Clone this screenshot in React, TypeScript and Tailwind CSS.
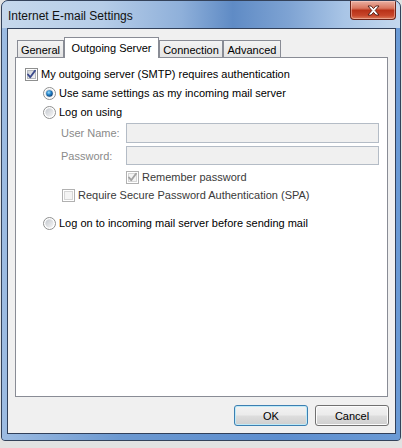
import React from "react";

const font = { fontFamily: '"Liberation Sans", Arial, sans-serif' };

function CheckBox({ checked, disabled }: { checked?: boolean; disabled?: boolean }) {
  const border = disabled ? "#b1b1b1" : "#8e8f8f";
  const mark = disabled ? "#a3a3a3" : "#3b4a8c";
  return (
    <svg width="13" height="13" viewBox="0 0 13 13" className="shrink-0">
      <defs>
        <linearGradient id="cbin" x1="0" y1="0" x2="1" y2="1">
          <stop offset="0" stopColor="#cbcfd5" />
          <stop offset="1" stopColor="#f6f6f6" />
        </linearGradient>
      </defs>
      <rect x="0.5" y="0.5" width="12" height="12" fill="#fff" stroke={border} />
      <rect x="2.5" y="2.5" width="8" height="8" fill={disabled ? "#f4f4f4" : "url(#cbin)"} stroke={disabled ? "#d6d6d6" : "#b4b8be"} />
      {checked && (
        <path d="M3 6.5 L5.2 9.2 L10 2.8" fill="none" stroke={mark} strokeWidth="1.9" strokeLinecap="round" strokeLinejoin="round" />
      )}
    </svg>
  );
}

function Radio({ checked }: { checked?: boolean }) {
  return (
    <svg width="13" height="13" viewBox="0 0 13 13" className="shrink-0">
      <defs>
        <linearGradient id="rdin" x1="0" y1="0" x2="1" y2="1">
          <stop offset="0" stopColor="#c4c8ce" />
          <stop offset="1" stopColor="#f7f7f7" />
        </linearGradient>
        <radialGradient id="rddot" cx="0.4" cy="0.35" r="0.7">
          <stop offset="0" stopColor="#9ee0ff" />
          <stop offset="0.5" stopColor="#1f7fc6" />
          <stop offset="1" stopColor="#0d3a6e" />
        </radialGradient>
      </defs>
      <circle cx="6.5" cy="6.5" r="6" fill="#fff" stroke="#8e8f8f" />
      <circle cx="6.5" cy="6.5" r="4.2" fill="url(#rdin)" />
      {checked && <circle cx="6.5" cy="6.5" r="3.3" fill="url(#rddot)" />}
    </svg>
  );
}

export default function App() {
  return (
    <div className="w-[402px] h-[448px] overflow-hidden bg-[#e2e2e2] text-[11px] leading-[16px] text-black" style={font}>
      <div className="ml-[1px] w-[400px] h-[441px] flex flex-col border border-[#34425a] rounded-t-[7px] rounded-b-[4px] overflow-hidden bg-[#6493cf]">
        {/* title bar */}
        <div className="h-[27px] shrink-0 flex items-start pl-[6px] pr-[4px] bg-[linear-gradient(90deg,#c6d8ec_0%,#b6cde8_25%,#8fb0da_45%,#5f8bc5_58%,#7ea3d3_72%,#a9c5e6_86%,#c4d8ee_100%)]">
          <span className="mt-[7px] text-[12px] text-[#111]">Internet E-mail Settings</span>
          <div className="ml-auto w-[46px] h-[19px] flex items-center justify-center rounded-b-[4px] border border-t-0 border-[#6b2318] bg-[linear-gradient(180deg,#eab0a2_0%,#d9765f_40%,#b93218_52%,#c7452a_80%,#dc7a58_100%)] shadow-[inset_0_0_0_1px_rgba(255,220,210,0.45)]">
            <svg width="13" height="11" viewBox="0 0 13 11">
              <path
                d="M1 1 H4.2 L6.5 3.6 L8.8 1 H12 L8.2 5.5 L12 10 H8.8 L6.5 7.4 L4.2 10 H1 L4.8 5.5 Z"
                fill="#fff"
                stroke="#4d1a12"
                strokeWidth="0.9"
                strokeLinejoin="round"
              />
            </svg>
          </div>
        </div>

        {/* frame + client */}
        <div className="flex-1 flex flex-col pl-[5px] pr-[4px] pb-[6px] bg-[linear-gradient(90deg,#9dbce2,#6b98d0_30%,#5d8ecf_70%,#6a9ad5)]">
          <div className="flex-1 flex flex-col border border-[#31405a] bg-[#f0f0f0] pt-[8px] px-[7px] pb-[7px]">
            {/* tabs */}
            <div className="h-[20px] flex items-end pl-[2px] text-[12px]">
              <div className="w-[47px] h-[17px] flex items-center justify-center pt-[1px] border border-b-0 border-[#898c95] bg-[linear-gradient(180deg,#f3f3f3,#e4e4e4)] text-[11px]">
                General
              </div>
              <div className="w-[95px] h-[21px] -mb-px relative z-10 flex items-center justify-center pb-[1px] border border-b-0 border-[#898c95] bg-white text-[11px]">
                Outgoing Server
              </div>
              <div className="w-[64px] h-[17px] flex items-center justify-center pt-[1px] border border-b-0 border-[#898c95] bg-[linear-gradient(180deg,#f3f3f3,#e4e4e4)] text-[11px]">
                Connection
              </div>
              <div className="w-[58px] h-[17px] flex items-center justify-center pt-[1px] border border-b-0 border-[#898c95] bg-[linear-gradient(180deg,#f3f3f3,#e4e4e4)] text-[11px]">
                Advanced
              </div>
            </div>

            {/* panel */}
            <div className="h-[340px] border border-[#898c95] bg-white flex flex-col pt-[8px]">
              <div className="h-[16px] flex items-center gap-[3px] pl-[9px]">
                <CheckBox checked />
                <span>My outgoing server (SMTP) requires authentication</span>
              </div>
              <div className="h-[16px] mt-[3px] flex items-center gap-[3px] pl-[27px]">
                <Radio checked />
                <span>Use same settings as my incoming mail server</span>
              </div>
              <div className="h-[16px] mt-[3px] flex items-center gap-[3px] pl-[27px]">
                <Radio />
                <span>Log on using</span>
              </div>
              <div className="h-[20px] mt-[3px] flex items-center pl-[45px]">
                <span className="w-[65px] text-[#8a8a8a]">User Name:</span>
                <div className="w-[253px] h-[20px] border border-[#b4bcc6] bg-[#f0f0f0]" />
              </div>
              <div className="h-[19px] mt-[3px] flex items-center pl-[45px]">
                <span className="w-[65px] text-[#8a8a8a]">Password:</span>
                <div className="w-[253px] h-[19px] border border-[#b4bcc6] bg-[#f0f0f0]" />
              </div>
              <div className="h-[16px] mt-[4px] flex items-center gap-[3px] pl-[110px]">
                <CheckBox checked disabled />
                <span className="text-[#3a3a3a]">Remember password</span>
              </div>
              <div className="h-[16px] mt-[2px] flex items-center gap-[3px] pl-[46px]">
                <CheckBox disabled />
                <span className="text-[#3a3a3a]">Require Secure Password Authentication (SPA)</span>
              </div>
              <div className="h-[16px] mt-[12px] flex items-center gap-[3px] pl-[27px]">
                <Radio />
                <span>Log on to incoming mail server before sending mail</span>
              </div>
            </div>

            {/* buttons */}
            <div className="mt-[8px] -mr-px flex justify-end gap-[7px]">
              <button className="w-[74px] h-[21px] rounded-[3px] border border-[#3c7fb1] bg-[linear-gradient(180deg,#f2f2f2_0%,#ebebeb_48%,#dddddd_52%,#cfcfcf_100%)] shadow-[inset_0_0_0_1px_#bfeaf8]">
                OK
              </button>
              <button className="w-[74px] h-[21px] rounded-[3px] border border-[#707070] bg-[linear-gradient(180deg,#f2f2f2_0%,#ebebeb_48%,#dddddd_52%,#cfcfcf_100%)] shadow-[inset_0_0_0_1px_#fcfcfc]">
                Cancel
              </button>
            </div>
          </div>
        </div>
      </div>
    </div>
  );
}
